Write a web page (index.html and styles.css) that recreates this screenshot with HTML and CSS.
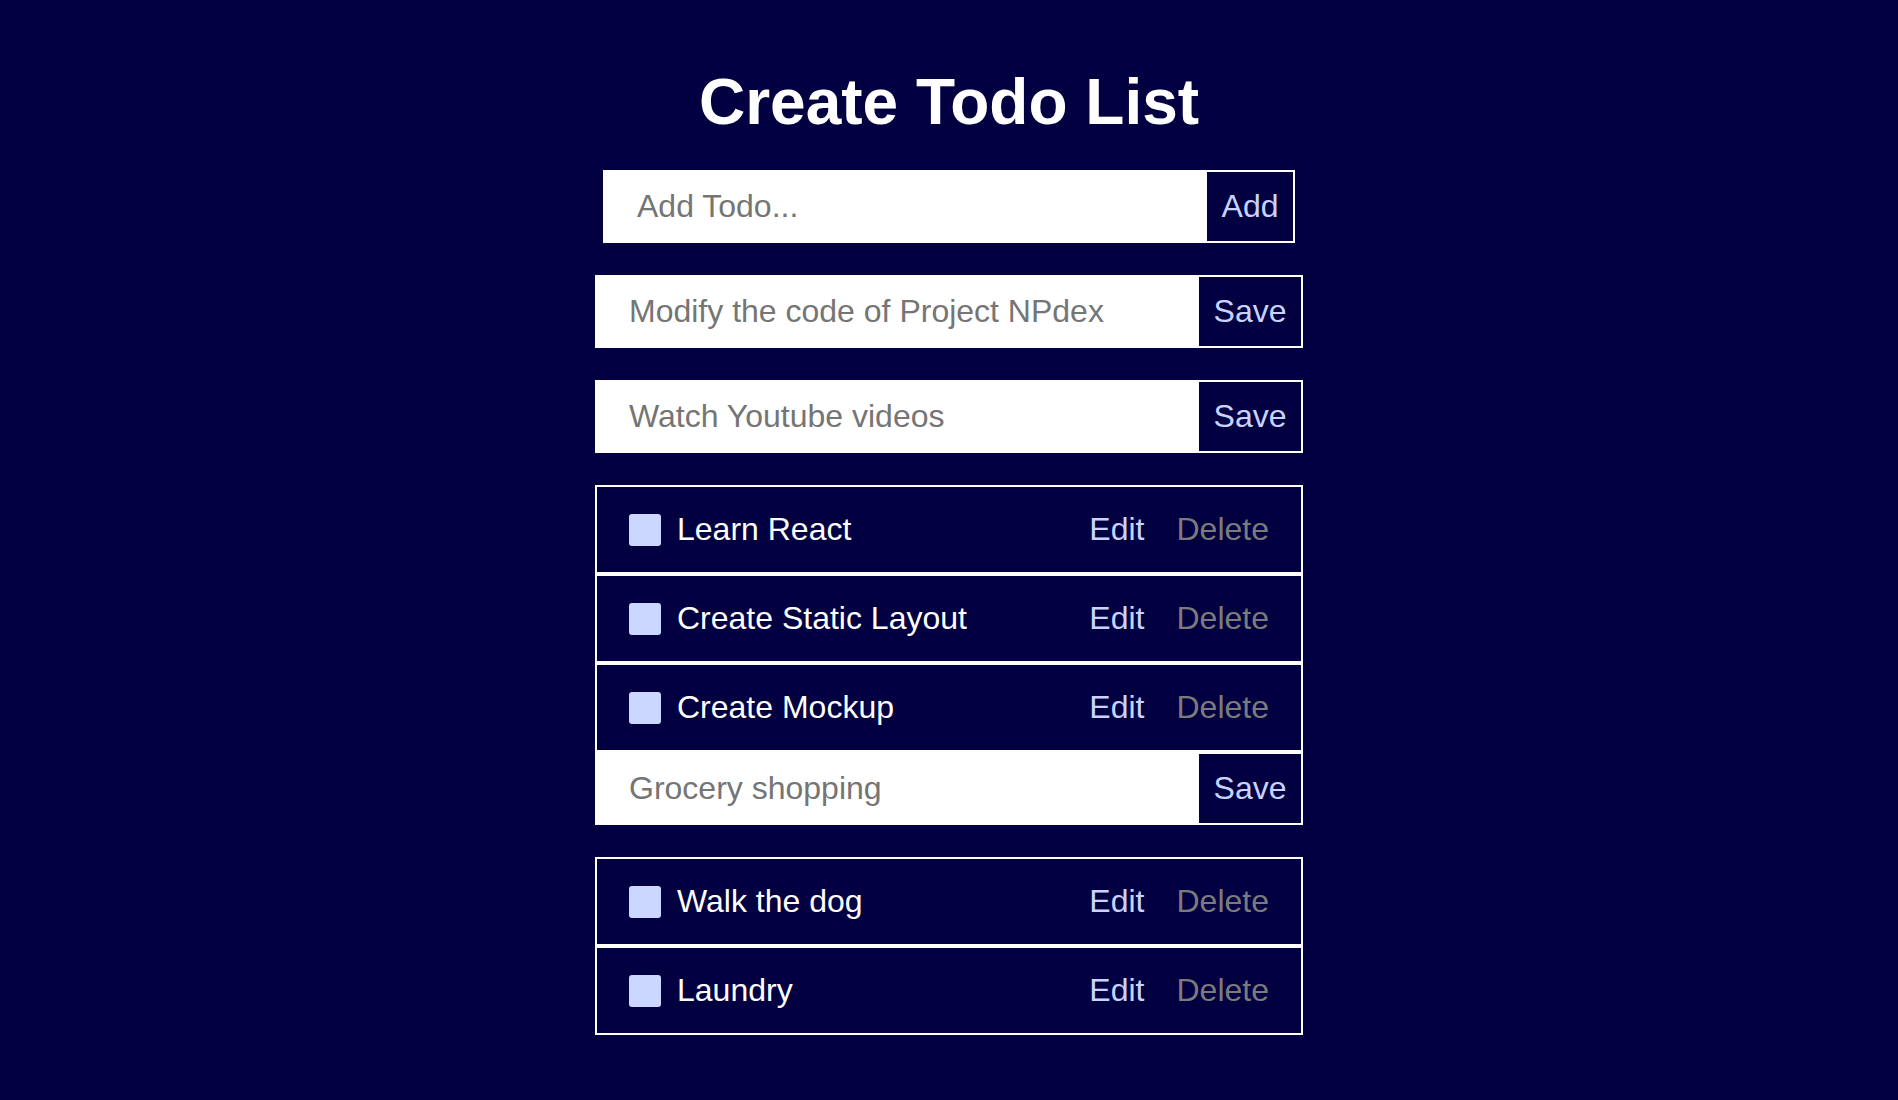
FILE: index.html
```html
<!DOCTYPE html>
<html lang="en">
<head>
<meta charset="utf-8">
<title>Create Todo List</title>
<link rel="stylesheet" href="styles.css">
</head>
<body>
<main class="app">
  <h1 class="title">Create Todo List</h1>
  <form class="entry entry--add">
    <input class="entry__input" type="text" placeholder="Add Todo...">
    <button class="entry__btn entry__btn--add" type="button">Add</button>
  </form>
  <ul class="list">
    <li class="list__item">
      <form class="entry">
        <input class="entry__input" type="text" value="Modify the code of Project NPdex">
        <button class="entry__btn" type="button">Save</button>
      </form>
    </li>
    <li class="list__item">
      <form class="entry">
        <input class="entry__input" type="text" value="Watch Youtube videos">
        <button class="entry__btn" type="button">Save</button>
      </form>
    </li>
    <li class="list__item">
      <div class="todo">
        <input class="todo__check" type="checkbox">
        <span class="todo__text">Learn React</span>
        <button class="todo__edit" type="button">Edit</button>
        <button class="todo__delete" type="button">Delete</button>
      </div>
    </li>
    <li class="list__item">
      <div class="todo">
        <input class="todo__check" type="checkbox">
        <span class="todo__text">Create Static Layout</span>
        <button class="todo__edit" type="button">Edit</button>
        <button class="todo__delete" type="button">Delete</button>
      </div>
    </li>
    <li class="list__item">
      <div class="todo">
        <input class="todo__check" type="checkbox">
        <span class="todo__text">Create Mockup</span>
        <button class="todo__edit" type="button">Edit</button>
        <button class="todo__delete" type="button">Delete</button>
      </div>
    </li>
    <li class="list__item">
      <form class="entry">
        <input class="entry__input" type="text" value="Grocery shopping">
        <button class="entry__btn" type="button">Save</button>
      </form>
    </li>
    <li class="list__item">
      <div class="todo">
        <input class="todo__check" type="checkbox">
        <span class="todo__text">Walk the dog</span>
        <button class="todo__edit" type="button">Edit</button>
        <button class="todo__delete" type="button">Delete</button>
      </div>
    </li>
    <li class="list__item">
      <div class="todo">
        <input class="todo__check" type="checkbox">
        <span class="todo__text">Laundry</span>
        <button class="todo__edit" type="button">Edit</button>
        <button class="todo__delete" type="button">Delete</button>
      </div>
    </li>
  </ul>
</main>
</body>
</html>
```
FILE: styles.css
```css
html, body {
  margin: 0;
  padding: 0;
  background: #020041;
}

body {
  font-family: "Liberation Sans", Arial, Helvetica, sans-serif;
  color: #ffffff;
  min-height: 1100px;
}

.app {
  width: 708px;
  margin: 0 auto;
  padding-top: 65px;
}

.title {
  margin: 0 0 31px;
  font-size: 64px;
  line-height: 74px;
  font-weight: 700;
  text-align: center;
  color: #ffffff;
}

.list {
  list-style: none;
  margin: 0;
  padding: 0;
}

.entry {
  display: flex;
  height: 73px;
  margin: 0 0 32px;
  background: #ffffff;
}

.entry--add {
  margin-left: 8px;
  margin-right: 8px;
}

.entry__input {
  flex: 1;
  min-width: 0;
  border: none;
  outline: none;
  margin: 0;
  padding: 0 0 0 34px;
  background: #ffffff;
  font-family: inherit;
  font-size: 32px;
  color: #757575;
}

.entry__input::placeholder {
  color: #757575;
  opacity: 1;
}

.entry__btn {
  box-sizing: border-box;
  width: 106px;
  height: 100%;
  margin: 0;
  padding: 0;
  border: 2px solid #ffffff;
  background: #020041;
  color: #c8d3ff;
  font-family: inherit;
  font-size: 32px;
}

.entry__btn--add {
  width: 90px;
}

.todo {
  box-sizing: border-box;
  display: flex;
  align-items: center;
  height: 89px;
  padding: 0 32px;
  border: 2px solid #ffffff;
  background: #020041;
}

.todo__check {
  appearance: none;
  -webkit-appearance: none;
  flex: none;
  width: 32px;
  height: 32px;
  margin: 0 16px 0 0;
  border: none;
  border-radius: 3px;
  background: #cbd7ff;
}

.todo__text {
  flex: 1;
  font-size: 32px;
  color: #ffffff;
}

.todo__edit,
.todo__delete {
  margin: 0;
  padding: 0;
  border: none;
  background: transparent;
  font-family: inherit;
  font-size: 32px;
}

.todo__edit {
  color: #c8d3ff;
  margin-right: 32px;
}

.todo__delete {
  color: #7b7b7b;
}
```
